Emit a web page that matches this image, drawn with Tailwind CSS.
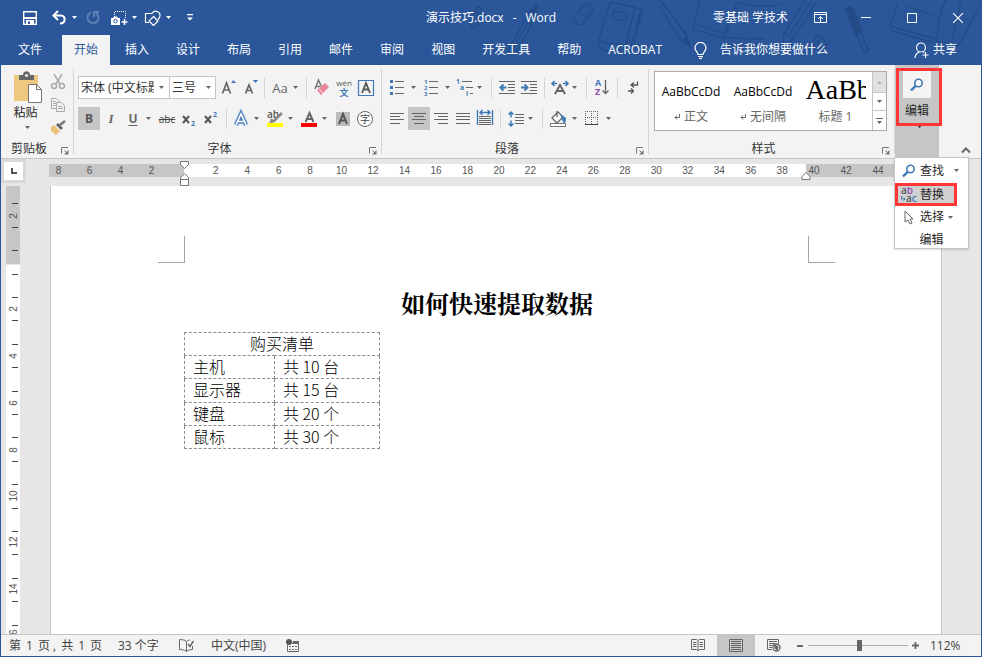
<!DOCTYPE html>
<html lang="zh-CN">
<head>
<meta charset="utf-8">
<meta name="viewport" content="width=device-width, initial-scale=1">
<title>演示技巧.docx - Word</title>
<script src="https://cdn.jsdelivr.net/npm/@tailwindcss/browser@4"></script>
</head>
<body class="h-screen flex flex-col overflow-hidden border-x border-b border-[#2b579a] bg-[#e6e6e6] text-[12px] leading-4 text-[#262626] font-['Open_Sans','Noto_Sans_CJK_SC',sans-serif]">

<svg class="hidden" aria-hidden="true">
  <symbol id="caret" viewBox="0 0 5 3"><path d="M0 0h5L2.5 3z" fill="currentColor"/></symbol>
  <symbol id="launcher" viewBox="0 0 8 8"><path d="M.5 6.500V.5H7M3.500 3.500l3 3" fill="none" stroke="#777"/><path d="M7.500 3v4.500H3z" fill="#777"/></symbol>
  <symbol id="lens" viewBox="0 0 14 14"><circle cx="8.500" cy="5" r="3.700" fill="#fff" stroke="#3f78b5" stroke-width="1.600"/><path d="M5.700 7.800L1 12.500" stroke="#3f78b5" stroke-width="2.400"/></symbol>
</svg>

<header class="relative shrink-0 bg-[#2b579a] text-white">
  <svg class="absolute right-0 top-0 w-[560px] h-[62px]" viewBox="420 0 560 62" fill="none" stroke="#234b88" stroke-width="1.300" aria-hidden="true">
    <path d="M474 10c2-5 7-3 6 1l-3 12c-1 7-9 6-7-1l3-8c1-4 5-3 4 1l-2 7"/>
    <path d="M536 4l-8 9-22 39M536 4l-2 13-19 37M528 13l6 4M531 15l-21 38"/><path d="M536 4l-5 7 4 3z" fill="#234b88"/>
    <path d="M573 17l11-13c4-1 8 2 8 6l-10 14c-5 3-10-2-9-7zM576 11l9 6"/>
    <path d="M609 2l31 7-10 37-33-4zM596 45l8 6 28-2 9-39M613 11l14 3-2 7-14-3zM634 6l-9 39"/>
    <path d="M660 2l25 31 4 13-11-8-19-32M662 3l25 35"/><path d="M689 46l-4-8-4 3z" fill="#234b88"/>
    <path d="M699 0l-7 29 31 9 17-36M695 25l28 8 13-31M740 3c16 4 29 5 45 0M724 38l40 1"/>
    <path d="M804 0l-21 34-2 14 11-9L815 2M783 34l9 4M788 35l22-33M818 50c-8-4-5-18 2-14 5 5 8 14 1 13-5-4-6-8-2-10"/>
    <path d="M845 9c3-4 8-2 9 3l7 19-6 4z" fill="#234b88"/><path d="M856 35l7 17 4-1-7-20"/>
    <path d="M897 3l-8 23 46 13M889 26l2 5 43 12M945 0c-8 13-7 24-10 41l22 5 22-40M960 1l-9 41M905 6l27 9"/>
  </svg>

  <div class="relative grid grid-cols-[1fr_auto_1fr] items-center h-[35px]">
    <div class="flex items-center pl-[18px]">
      <button aria-label="保存" class="w-[22px] h-6 flex items-center justify-center"><svg class="w-[14px] h-[14px]" viewBox="0 0 14 14"><path d="M.7.7h12.600v12.600H.7z" fill="none" stroke="#fff" stroke-width="1.400"/><path d="M1 6h12v2H1zM3 9h8v4H3z" fill="#fff"/><path d="M5 10.500h2V13H5z" fill="#2b579a"/></svg></button>
      <button aria-label="撤消" class="ml-[9px] w-[18px] h-6 flex items-center justify-center"><svg class="w-4 h-4" viewBox="0 0 16 16" fill="none" stroke="#fff" stroke-width="2"><path d="M7 1L2.500 5.500 7 10M3 5.500h7c5 0 5 8-1 8"/></svg></button>
      <button aria-label="撤消选项" class="w-3 h-6 flex items-center justify-center"><svg class="w-[5px] h-[3px]"><use href="#caret"/></svg></button>
      <button aria-label="恢复" class="ml-1 w-[18px] h-6 flex items-center justify-center text-[#5d80b5]"><svg class="w-4 h-4" viewBox="0 0 16 16" fill="none" stroke="currentColor" stroke-width="2"><path d="M6 2.500a5.500 5.500 0 1 0 5 .5M9 7V2h5"/></svg></button>
      <button aria-label="截图" class="ml-2 w-[18px] h-6 flex items-center justify-center"><svg class="w-[17px] h-4" viewBox="0 0 17 16"><path d="M3.500 7V1.500h11V9" fill="none" stroke="#fff" stroke-dasharray="1 1"/><path d="M0 8h2l1-1.500h3L7 8h2v7H0z" fill="#fff"/><circle cx="4.500" cy="11.200" r="1.700" fill="none" stroke="#2b579a"/><path d="M13.500 9v6M10.500 12h6" stroke="#fff" stroke-width="1.500"/></svg></button>
      <button aria-label="截图选项" class="w-3 h-6 flex items-center justify-center"><svg class="w-[5px] h-[3px]"><use href="#caret"/></svg></button>
      <button aria-label="形状" class="ml-[2px] w-[20px] h-6 flex items-center justify-center"><svg class="w-[17px] h-4" viewBox="0 0 17 16" fill="none" stroke="#fff" stroke-width="1.200"><path d="M5 12.500H1.500v-9H8M8 3.500c2-4 8-2.500 8 2 0 2-1 3-2 4M9.500 6.500L14 11l-4.500 4.500L5 11z"/></svg></button>
      <button aria-label="形状选项" class="w-3 h-6 flex items-center justify-center"><svg class="w-[5px] h-[3px]"><use href="#caret"/></svg></button>
      <button aria-label="自定义快速访问工具栏" class="ml-[10px] w-3 h-6 flex items-center justify-center"><svg class="w-[6px] h-[7px]" viewBox="0 0 6 7"><path d="M0 0h6v1.200H0zM0 3.500h6L3 6.500z" fill="#fff"/></svg></button>
    </div>
    <h1 class="flex gap-[9px]"><span>演示技巧.docx</span><span>-</span><span>Word</span></h1>
    <div class="flex items-center justify-end">
      <span class="mr-[9px]">零基础 学技术</span>
      <button aria-label="功能区显示选项" class="w-[46px] h-8 flex items-center justify-center"><svg class="w-[13px] h-[11px]" viewBox="0 0 13 11" fill="none" stroke="#fff"><path d="M.5.5h12v10H.5zM.5 2.500h12M6.500 10V4.500M4 7l2.500-2.500L9 7"/></svg></button>
      <button aria-label="最小化" class="w-[46px] h-8 flex items-center justify-center"><svg class="w-[10px] h-[10px]" viewBox="0 0 10 10"><path d="M0 4.500h10" stroke="#fff"/></svg></button>
      <button aria-label="最大化" class="w-[46px] h-8 flex items-center justify-center"><svg class="w-[10px] h-[10px]" viewBox="0 0 10 10"><path d="M.5.5h9v9h-9z" fill="none" stroke="#fff"/></svg></button>
      <button aria-label="关闭" class="w-[46px] h-8 flex items-center justify-center"><svg class="w-[10px] h-[10px]" viewBox="0 0 10 10"><path d="M0 0l10 10M10 0L0 10" stroke="#fff" stroke-width="1.100"/></svg></button>
    </div>
  </div>

  <nav class="relative flex h-[30px] gap-[3px] pl-[5px] whitespace-nowrap" aria-label="功能区选项卡">
    <button class="px-3 mr-[5px]">文件</button>
    <button class="px-3 bg-[#f3f3f3] text-[#2b579a]">开始</button>
    <button class="px-3">插入</button>
    <button class="px-3">设计</button>
    <button class="px-3">布局</button>
    <button class="px-3">引用</button>
    <button class="px-3">邮件</button>
    <button class="px-3">审阅</button>
    <button class="px-3">视图</button>
    <button class="px-3">开发工具</button>
    <button class="px-3">帮助</button>
    <button class="px-3">ACROBAT</button>
    <button class="flex items-center gap-[13px] ml-[17px]"><svg class="w-[13px] h-[17px]" viewBox="0 0 13 17" fill="none" stroke="#fff" stroke-width="1.200"><path d="M4 12.500c0-2-3-3.500-3-6.500a5.500 5.500 0 0 1 11 0c0 3-3 4.500-3 6.500zM4 14.500h5M5 16.400h3"/></svg>告诉我你想要做什么</button>
    <button class="flex items-center gap-[3px] ml-auto mr-6"><svg class="w-4 h-[17px]" viewBox="0 0 16 17" fill="none" stroke="#fff" stroke-width="1.200"><circle cx="7" cy="5.500" r="4.500"/><path d="M1 16c0-3 2-5 4.500-6.300M9 9.500l1 1M11.500 10v6M8.500 13h6"/></svg>共享</button>
  </nav>
</header>

<section class="relative shrink-0 flex h-[94px] border-b border-[#c6c6c6] bg-[#f3f3f3] text-[#666]" aria-label="功能区">
  <!-- 剪贴板 -->
  <div class="flex flex-col w-[72px]">
    <div class="flex pt-[6px]">
      <button class="flex flex-col items-center w-[49px] text-[#262626]">
        <svg class="w-[28px] h-[33px] ml-[4px]" viewBox="0 0 28 33"><path d="M0 4h24v26H0z" fill="#edc87e"/><path d="M5 4h4c0-5 7-5 7 0h4v5H5z" fill="#666"/><path d="M11 4.500h3" stroke="#fff" stroke-width="2"/><path d="M14.500 13.500h8l5 5v13h-13z" fill="#fff" stroke="#777"/><path d="M22.500 13.500v5h5" fill="none" stroke="#777"/></svg>
        <span class="mt-[1px]">粘贴</span>
        <svg class="w-[5px] h-[3px] mt-[5px] ml-1 text-[#666]"><use href="#caret"/></svg>
      </button>
      <div class="flex flex-col gap-[1px]">
        <button aria-label="剪切" class="w-4 h-[22px]"><svg class="w-4 h-4" viewBox="0 0 16 16" fill="none" stroke="#aaa" stroke-width="1.500"><path d="M4 0l6 10M12 0L6 10"/><circle cx="4" cy="12" r="2.500"/><circle cx="12" cy="12" r="2.500"/></svg></button>
        <button aria-label="复制" class="w-4 h-[22px]"><svg class="w-4 h-4" viewBox="0 0 16 16" fill="#f3f3f3" stroke="#aaa"><path d="M1.500 1.500h5l3 3v7h-8zM3 4.500h3M3 6.500h4M3 8.500h4"/><path d="M6.500 5.500h5l3 3v6h-8zM8 9.500h4.500M8 11.500h5"/></svg></button>
        <button aria-label="格式刷" class="w-4 h-[22px]"><svg class="w-4 h-4" viewBox="0 0 16 16"><path d="M1 7l3-2 6 6-4 4-5-4z" fill="#edc07a"/><path d="M6 5l2-2 5 5-2 2z" fill="#666"/><path d="M10 5l5-4" stroke="#777" stroke-width="2.500"/></svg></button>
      </div>
    </div>
    <div class="mt-auto flex items-center h-4 mb-px text-[#333]"><span class="flex-1 text-center">剪贴板</span><button aria-label="剪贴板选项" class="w-4 h-4 pt-1 pl-1"><svg class="w-2 h-2"><use href="#launcher"/></svg></button></div>
  </div>
  <div class="w-px my-1 bg-[#d4d4d4]"></div>

  <!-- 字体 -->
  <div class="flex flex-col w-[307px] pt-[11px]">
    <div class="flex items-center h-[23px] pl-1">
      <label class="relative w-[92px] h-[23px]"><span class="sr-only">字体</span>
        <select class="appearance-none w-full h-full bg-white border border-[#c6c6c6] pl-[2px] pr-[15px] text-[#333] overflow-hidden"><option>宋体 (中文标题)</option></select>
        <svg class="absolute right-[6px] top-[10px] w-[5px] h-[3px] pointer-events-none"><use href="#caret"/></svg></label>
      <label class="relative -ml-px w-[47px] h-[23px]"><span class="sr-only">字号</span>
        <select class="appearance-none w-full h-full bg-white border border-[#c6c6c6] pl-[2px] pr-3 text-[#333]"><option>三号</option></select>
        <svg class="absolute right-[5px] top-[10px] w-[5px] h-[3px] pointer-events-none"><use href="#caret"/></svg></label>
      <button aria-label="增大字号" class="ml-[2px] w-[22px]"><svg class="w-[22px] h-[22px]" viewBox="0 0 22 22"><path d="M4.500 16.500l4-10.500 4 10.500M6 13h5" fill="none" stroke="#666" stroke-width="1.700"/><path d="M13 6h5l-2.500-3z" fill="#3f78b5"/></svg></button>
      <button aria-label="减小字号" class="w-[22px]"><svg class="w-[22px] h-[22px]" viewBox="0 0 22 22"><path d="M5.500 16.500L9 8l3.500 8.500M7 13.500h4" fill="none" stroke="#666" stroke-width="1.700"/><path d="M13 3h5l-2.500 3z" fill="#3f78b5"/></svg></button>
      <span class="w-px h-5 mx-[2px] bg-[#d4d4d4]"></span>
      <button aria-label="更改大小写" class="w-8 ml-[2px] flex items-center"><span class="w-[22px] text-[13px] text-center">Aa</span><svg class="ml-[2px] w-[5px] h-[3px]"><use href="#caret"/></svg></button>
      <span class="w-px h-5 ml-[5px] mr-1 bg-[#d4d4d4]"></span>
      <button aria-label="清除所有格式" class="w-[22px]"><svg class="w-[22px] h-[22px]" viewBox="0 0 22 22"><path d="M4 12l3.500-9L11 11M5 9.500h4" fill="none" stroke="#777" stroke-width="1.500"/><path d="M6 13l8-7 4 4-8 8z" fill="#e9869a"/><path d="M8 11.500l4 5" stroke="#f6dfe3"/></svg></button>
      <button aria-label="拼音指南" class="w-[22px]"><svg class="w-[22px] h-[22px]" viewBox="0 0 22 22"><text x="11" y="9" text-anchor="middle" font-size="8" fill="#555">wén</text><text x="11" y="19" text-anchor="middle" font-size="9" font-weight="700" fill="#3f78b5">文</text></svg></button>
      <button aria-label="字符边框" class="w-[22px]"><svg class="w-[22px] h-[22px]" viewBox="0 0 22 22" fill="none"><path d="M3.500 3.500h15v15h-15z" stroke="#3f78b5" stroke-width="1.200"/><path d="M7 16l4-10 4 10M8.500 12.500h5" stroke="#555" stroke-width="1.800"/></svg></button>
    </div>
    <div class="flex items-center h-[23px] pl-1 mt-2">
      <button aria-label="加粗" class="w-[22px] h-[23px] bg-[#c6c6c6] font-bold text-[#555]">B</button>
      <button aria-label="倾斜" class="w-[22px] h-[23px] italic text-[13px] font-semibold font-['Liberation_Serif',serif]">I</button>
      <button aria-label="下划线" class="w-8 h-[23px] mr-[2px] flex items-center"><span class="w-[22px] text-center underline font-bold underline-offset-2">U</span><svg class="ml-[2px] w-[5px] h-[3px]"><use href="#caret"/></svg></button>
      <button aria-label="删除线" class="w-[22px] h-[23px] line-through text-[10px] text-[#444]">abc</button>
      <button aria-label="下标" class="w-[22px] h-[23px]"><svg class="w-[22px] h-[22px]" viewBox="0 0 22 22"><path d="M5 8l6 7M11 8l-6 7" stroke="#555" stroke-width="2"/><text x="13" y="18" font-size="7" font-weight="700" fill="#3f78b5">2</text></svg></button>
      <button aria-label="上标" class="w-[22px] h-[23px]"><svg class="w-[22px] h-[22px]" viewBox="0 0 22 22"><path d="M5 8l6 7M11 8l-6 7" stroke="#555" stroke-width="2"/><text x="13" y="9" font-size="7" font-weight="700" fill="#3f78b5">2</text></svg></button>
      <span class="w-px h-5 ml-1 mr-[3px] bg-[#d4d4d4]"></span>
      <button aria-label="文本效果" class="w-8 mr-[2px] flex items-center"><svg class="w-[22px] h-[22px]" viewBox="0 0 22 22" fill="none"><path d="M6 17l5-11 5 11M8 13.500h6" stroke="#bcd5ee" stroke-width="5.600"/><path d="M6 17l5-11 5 11M8 13.500h6" stroke="#3f78b5" stroke-width="3.800"/><path d="M6 16.800l5-10.800 5 10.800M8 13.500h6" stroke="#fff" stroke-width="1.600"/></svg><svg class="ml-[2px] w-[5px] h-[3px]"><use href="#caret"/></svg></button>
      <button aria-label="突出显示颜色" class="w-8 mr-[2px] flex items-center"><svg class="w-[22px] h-[22px]" viewBox="0 0 22 22"><text x="3" y="10" font-size="10" font-weight="600" fill="#555">ab</text><path d="M18 5l-8 8-3 1 1-3" fill="none" stroke="#888" stroke-width="2.500"/><path d="M3 15h16v4H3z" fill="#ff0"/></svg><svg class="ml-[2px] w-[5px] h-[3px]"><use href="#caret"/></svg></button>
      <button aria-label="字体颜色" class="w-8 mr-[2px] flex items-center"><svg class="w-[22px] h-[22px]" viewBox="0 0 22 22"><path d="M7.500 14l4-9 4 9M9 11h5" fill="none" stroke="#666" stroke-width="2"/><path d="M3 15h16v4H3z" fill="red"/></svg><svg class="ml-[2px] w-[5px] h-[3px]"><use href="#caret"/></svg></button>
      <button aria-label="字符底纹" class="w-[22px]"><svg class="w-[22px] h-[22px]" viewBox="0 0 22 22"><path d="M4 4h14v14H4z" fill="#bbb"/><path d="M7 16l4-10 4 10M8.500 12.500h5" fill="none" stroke="#555" stroke-width="2"/></svg></button>
      <button aria-label="带圈字符" class="w-[22px]"><svg class="w-[22px] h-[22px]" viewBox="0 0 22 22"><circle cx="11" cy="11" r="7.500" fill="#fff" stroke="#666"/><text x="11" y="14.500" text-anchor="middle" font-size="10" fill="#444">字</text></svg></button>
    </div>
    <div class="mt-auto flex items-center h-4 mb-px text-[#333]"><span class="flex-1 text-center">字体</span><button aria-label="字体选项" class="w-4 h-4 pt-1 pl-1"><svg class="w-2 h-2"><use href="#launcher"/></svg></button></div>
  </div>
  <div class="w-px my-1 bg-[#d4d4d4]"></div>

  <!-- 段落 -->
  <div class="flex flex-col w-[266px] pt-[11px]">
    <div class="flex items-center h-[23px] pl-1">
      <button aria-label="项目符号" class="w-8 mr-[2px] flex items-center"><svg class="w-[22px] h-[22px]" viewBox="0 0 22 22"><path d="M9 4.500h9M9 10.500h9M9 16.500h9" stroke="#666"/><path d="M4 3h3v3H4zM4 9h3v3H4zM4 15h3v3H4z" fill="#3f78b5"/></svg><svg class="ml-[3px] w-[5px] h-[3px]"><use href="#caret"/></svg></button>
      <button aria-label="编号" class="w-8 mr-[2px] flex items-center"><svg class="w-[22px] h-[22px]" viewBox="0 0 22 22"><path d="M9 4.500h9M9 10.500h9M9 16.500h9" stroke="#666"/><g font-size="6" font-weight="700" fill="#3f78b5"><text x="4" y="7">1</text><text x="4" y="13">2</text><text x="4" y="19">3</text></g></svg><svg class="ml-[3px] w-[5px] h-[3px]"><use href="#caret"/></svg></button>
      <button aria-label="多级列表" class="w-8 flex items-center"><svg class="w-[22px] h-[22px]" viewBox="0 0 22 22"><path d="M8 4.500h10M12 10.500h7M16 16.500h3" stroke="#666"/><g font-size="7" font-weight="700" fill="#3f78b5"><text x="2" y="7">1</text><text x="6" y="13">a</text><text x="12" y="19">i</text></g></svg><svg class="ml-px w-[5px] h-[3px]"><use href="#caret"/></svg></button>
      <span class="w-px h-5 ml-[5px] mr-1 bg-[#d4d4d4]"></span>
      <button aria-label="减少缩进量" class="w-[22px]"><svg class="w-[22px] h-[22px]" viewBox="0 0 22 22"><path d="M3 4.500h16M12 7.500h7M12 10.500h7M12 13.500h7M3 16.500h16" stroke="#666"/><path d="M10.500 10.500H5M7.500 7.500l-3 3 3 3" fill="none" stroke="#3f78b5" stroke-width="2"/></svg></button>
      <button aria-label="增加缩进量" class="w-[22px]"><svg class="w-[22px] h-[22px]" viewBox="0 0 22 22"><path d="M3 4.500h16M12 7.500h7M12 10.500h7M12 13.500h7M3 16.500h16" stroke="#666"/><path d="M3 10.500h6M6.500 7.500l3 3-3 3" fill="none" stroke="#3f78b5" stroke-width="2"/></svg></button>
      <span class="w-px h-5 mx-1 bg-[#d4d4d4]"></span>
      <button aria-label="中文版式" class="w-8 flex items-center"><svg class="w-[22px] h-[22px]" viewBox="0 0 22 22" fill="none"><path d="M6 17l5-9 5 9M8 14h6" stroke="#666" stroke-width="2"/><path d="M3 6.500h5M5.500 4L3 6.500 5.500 9M19 6.500h-5M16.500 4L19 6.500 16.500 9" stroke="#3f78b5" stroke-width="1.600"/></svg><svg class="ml-px w-[5px] h-[3px]"><use href="#caret"/></svg></button>
      <span class="w-px h-5 ml-[5px] mr-1 bg-[#d4d4d4]"></span>
      <button aria-label="排序" class="w-[22px]"><svg class="w-[22px] h-[22px]" viewBox="0 0 22 22"><g font-size="9" font-weight="700"><text x="4" y="9" fill="#3f78b5">A</text><text x="4" y="18" fill="#8e4fb0">Z</text></g><path d="M14.500 3v13M11.500 13.500l3 3 3-3" fill="none" stroke="#666" stroke-width="1.300"/></svg></button>
      <span class="w-px h-5 mx-1 bg-[#d4d4d4]"></span>
      <button aria-label="显示编辑标记" class="w-[22px]"><svg class="w-[22px] h-[22px]" viewBox="0 0 22 22" fill="none" stroke="#555" stroke-width="1.300"><path d="M15.500 4.500V8h-6M12 5.500L9 8l3 2.500M6 14h5M9 11.500l2.500 2.500L9 16.500"/></svg></button>
    </div>
    <div class="flex items-center h-[23px] pl-1 mt-2">
      <button aria-label="左对齐" class="w-[22px] h-[23px]"><svg class="w-[22px] h-[22px]" viewBox="0 0 22 22"><path d="M4 5.500h14M4 8.500h10M4 11.500h14M4 15.500h10" stroke="#666"/></svg></button>
      <button aria-label="居中" class="w-[22px] h-[23px] bg-[#c6c6c6]"><svg class="w-[22px] h-[22px]" viewBox="0 0 22 22"><path d="M4 5.500h14M6 8.500h10M4 11.500h14M6 15.500h10" stroke="#666"/></svg></button>
      <button aria-label="右对齐" class="w-[22px] h-[23px]"><svg class="w-[22px] h-[22px]" viewBox="0 0 22 22"><path d="M4 5.500h14M8 8.500h10M4 11.500h14M8 15.500h10" stroke="#666"/></svg></button>
      <button aria-label="两端对齐" class="w-[22px] h-[23px]"><svg class="w-[22px] h-[22px]" viewBox="0 0 22 22"><path d="M4 5.500h14M4 8.500h14M4 11.500h14M4 15.500h14" stroke="#666"/></svg></button>
      <button aria-label="分散对齐" class="w-[22px] h-[23px]"><svg class="w-[22px] h-[22px]" viewBox="0 0 22 22"><path d="M5 8.500h12M5 10.500h12M5 12.500h12M5 14.500h12M5 16.500h12" stroke="#666"/><path d="M3.500 2v15M18.500 2v15M6 4.500h10M8.500 2L6 4.500 8.500 7M13.500 2L16 4.500 13.500 7" fill="none" stroke="#3f78b5" stroke-width="1.400"/></svg></button>
      <span class="w-px h-5 mx-1 bg-[#d4d4d4]"></span>
      <button aria-label="行距" class="w-8 flex items-center"><svg class="w-[22px] h-[22px]" viewBox="0 0 22 22" fill="none"><path d="M10 6.500h9M10 9.500h9M10 12.500h9M10 15.500h9" stroke="#666"/><path d="M6 3.500v6M6 12.500v6M3.500 6.500L6 4l2.500 2.500M3.500 15.500L6 18l2.500-2.500" stroke="#3f78b5" stroke-width="1.500"/></svg><svg class="ml-px w-[5px] h-[3px]"><use href="#caret"/></svg></button>
      <span class="w-px h-5 ml-[5px] mr-1 bg-[#d4d4d4]"></span>
      <button aria-label="底纹" class="w-8 mr-[2px] flex items-center"><svg class="w-[22px] h-[22px]" viewBox="0 0 22 22"><path d="M5 10l6-6 5 5-6 6z" fill="#fff" stroke="#666" stroke-width="1.300"/><path d="M10 9V3" stroke="#666" stroke-width="1.300"/><path d="M13 6l6 4-1 6-2-2z" fill="#3f78b5"/><path d="M3.500 15.500h15v3h-15z" fill="#fff" stroke="#777"/></svg><svg class="ml-[3px] w-[5px] h-[3px]"><use href="#caret"/></svg></button>
      <button aria-label="边框" class="w-8 flex items-center"><svg class="w-[22px] h-[22px]" viewBox="0 0 22 22"><path d="M4.500 16V3M4 3.500h13M16.500 3v13M10.500 3v13M4 9.500h13" fill="none" stroke="#666" stroke-dasharray="1 1"/><path d="M4 16.500h13" stroke="#444"/></svg><svg class="ml-[3px] w-[5px] h-[3px]"><use href="#caret"/></svg></button>
    </div>
    <div class="mt-auto flex items-center h-4 mb-px text-[#333]"><span class="flex-1 text-center">段落</span><button aria-label="段落选项" class="w-4 h-4 pt-1 pl-1"><svg class="w-2 h-2"><use href="#launcher"/></svg></button></div>
  </div>
  <div class="w-px my-1 bg-[#d4d4d4]"></div>

  <!-- 样式 -->
  <div class="flex flex-col w-[245px] pt-[6px]">
    <div class="flex w-[233px] h-[60px] ml-[5px] border border-[#ababab] bg-white">
      <button class="w-[72px] h-full flex flex-col items-center"><span class="h-10 pt-3 text-black">AaBbCcDd</span><span class="flex items-center gap-1 h-[10px]"><svg class="w-[6px] h-[6px]" viewBox="0 0 6 6" fill="none" stroke="#666"><path d="M5.500 0v3.500H1M3 1.500l-2 2 2 2"/></svg>正文</span></button>
      <button class="w-[72px] h-full flex flex-col items-center"><span class="h-10 pt-3 text-black">AaBbCcDd</span><span class="flex items-center gap-1 h-[10px]"><svg class="w-[6px] h-[6px]" viewBox="0 0 6 6" fill="none" stroke="#666"><path d="M5.500 0v3.500H1M3 1.500l-2 2 2 2"/></svg>无间隔</span></button>
      <button class="flex-1 h-full flex flex-col items-center"><span class="w-[60px] h-10 pt-[3px] overflow-hidden whitespace-nowrap text-left text-[28px] leading-[30px] text-black font-['Liberation_Serif',serif]">AaBb</span><span class="flex items-center h-[10px]">标题 1</span></button>
      <div class="flex flex-col w-[14px] border-l border-[#c6c6c6]">
        <button aria-label="上一行" class="h-5 flex items-center justify-center bg-[#e1e1e1] text-[#b5b5b5]"><svg class="w-[5px] h-[3px] rotate-180"><use href="#caret"/></svg></button>
        <button aria-label="下一行" class="h-[19px] flex items-center justify-center border-y border-[#c6c6c6]"><svg class="w-[5px] h-[3px]"><use href="#caret"/></svg></button>
        <button aria-label="其他样式" class="flex-1 flex items-center justify-center"><svg class="w-[7px] h-[6px]" viewBox="0 0 7 6"><path d="M0 0h7v1H0zM1 3h5L3.500 6z" fill="#666"/></svg></button>
      </div>
    </div>
    <div class="mt-auto flex items-center h-4 mb-px text-[#333]"><span class="flex-1 text-center">样式</span><button aria-label="样式选项" class="w-4 h-4 pt-1 pl-1"><svg class="w-2 h-2"><use href="#launcher"/></svg></button></div>
  </div>
  <div class="w-px my-1 bg-[#d4d4d4]"></div>

  <!-- 编辑 -->
  <div class="relative w-[44px] bg-[#c6c6c6]">
    <button class="w-full flex flex-col items-center pt-[6px] text-[#262626]">
      <span class="w-7 h-[27px] flex items-center justify-center bg-[#f3f3f3]"><svg class="w-[14px] h-[14px]"><use href="#lens"/></svg></span>
      <span class="mt-[5px]">编辑</span>
      <svg class="mt-[6px] ml-1 w-[5px] h-[3px]"><use href="#caret"/></svg>
    </button>
    <div class="absolute left-[1px] top-[3px] w-[46px] h-[58px] border-3 border-[#ff3636]"></div>
    <div role="menu" class="absolute z-10 -left-px top-[92px] w-[75px] h-[92px] flex flex-col bg-white border border-[#c6c6c6] shadow-sm text-[#262626]">
      <button role="menuitem" class="flex items-center h-[25px] pl-[7px]"><svg class="w-[14px] h-[14px]"><use href="#lens"/></svg><span class="ml-1">查找</span><svg class="ml-[10px] w-[5px] h-[3px] text-[#666]"><use href="#caret"/></svg></button>
      <button role="menuitem" class="relative flex items-center h-[23px] w-[62px] pl-1 border-3 border-[#ff3636] bg-[#d0d0d0]"><svg class="-ml-[2px] w-[18px] h-4" viewBox="0 0 18 16" font-size="10" font-weight="600"><text x="1" y="7" fill="#555">a<tspan fill="#8e4fb0">b</tspan></text><text x="6" y="15" fill="#555">a<tspan fill="#3f78b5">c</tspan></text><path d="M1.500 9v3H5M3.500 10.500L5 12l-1.500 1.500" fill="none" stroke="#3f78b5"/></svg><span class="ml-[2px]">替换</span></button>
      <button role="menuitem" class="flex items-center h-[22px] pl-[9px]"><svg class="w-[10px] h-[15px]" viewBox="0 0 10 15"><path d="M1 1v11l3-2 2 4 2-1-2-4h3z" fill="#fff" stroke="#666"/></svg><span class="ml-[6px]">选择</span><svg class="ml-1 w-[5px] h-[3px] text-[#666]"><use href="#caret"/></svg></button>
      <div class="flex-1 pt-1 text-center">编辑</div>
    </div>
  </div>
  <button aria-label="折叠功能区" class="ml-auto mr-[10px] mt-auto mb-1"><svg class="w-[10px] h-[7px]" viewBox="0 0 10 7"><path d="M1 5.500l4-4 4 4" fill="none" stroke="#666" stroke-width="2"/></svg></button>
</section>

<main class="flex-1 min-h-0 flex flex-col">
  <!-- 水平标尺 -->
  <div class="relative shrink-0 flex h-[27px] text-[10px] leading-[13px] text-[#555] font-['Liberation_Sans',sans-serif]">
    <div class="w-[25px] h-[24px] bg-[#d9d9d9] p-[3px]"><button aria-label="制表符" class="w-[19px] h-[18px] flex items-center justify-center bg-white"><svg class="w-[6px] h-[6px]" viewBox="0 0 6 6"><path d="M1 0v5h5" fill="none" stroke="#555" stroke-width="2"/></svg></button></div>
    <div class="relative flex flex-1 h-[13px] mt-[5px] ml-[23px] mr-[40px]">
      <div class="flex justify-end w-[135px] pr-[17px] overflow-hidden bg-[#c6c6c6] text-center *:w-[31px] *:shrink-0"><span>8</span><span>6</span><span>4</span><span>2</span></div>
      <div class="flex flex-1 pl-4 pr-2 bg-white text-center *:flex-1 *:w-0"><span>2</span><span>4</span><span>6</span><span>8</span><span>10</span><span>12</span><span>14</span><span>16</span><span>18</span><span>20</span><span>22</span><span>24</span><span>26</span><span>28</span><span>30</span><span>32</span><span>34</span><span>36</span><span>38</span></div>
      <div class="flex gap-5 w-[135px] pl-[2px] bg-[#c6c6c6] text-center *:w-3"><span>40</span><span>42</span><span>44</span></div>
      <svg class="absolute left-[130px] -top-[3px] w-[11px] h-[26px]" viewBox="0 0 11 26" fill="#fff" stroke="#777"><path d="M1.500.5h8v3l-4 4-4-4zM5.500 12.500l4 4v2h-8v-2zM1.500 18.500h8v6h-8z"/></svg>
      <svg class="absolute right-[130px] top-[8px] w-[10px] h-[8px]" viewBox="0 0 10 8" fill="#fff" stroke="#777"><path d="M5 .5l4 4v3H1v-3z"/></svg>
    </div>
  </div>

  <div class="flex-1 min-h-0 flex overflow-hidden">
    <!-- 垂直标尺 -->
    <svg class="shrink-0 ml-[5px] w-[14px] h-[448px]" viewBox="0 0 14 448" aria-label="垂直标尺">
      <path d="M0 0h14v78H0z" fill="#c6c6c6"/><path d="M0 79h14v369H0z" fill="#fff"/>
      <path d="M6 17.500h6M6 41.500h6M6 64.500h6M6 88.500h6M6 111.500h6M6 134.500h6M6 158.500h6M6 181.500h6M6 205.500h6M6 228.500h6M6 251.500h6M6 275.500h6M6 298.500h6M6 322.500h6M6 345.500h6M6 368.500h6M6 392.500h6M6 415.500h6M6 439.500h6" stroke="#444"/>
      <g font-size="10" fill="#555" text-anchor="middle" font-family="Liberation Sans, sans-serif"><text transform="translate(11 30) rotate(-90)">2</text><text transform="translate(11 123) rotate(-90)">2</text><text transform="translate(11 170) rotate(-90)">4</text><text transform="translate(11 217) rotate(-90)">6</text><text transform="translate(11 264) rotate(-90)">8</text><text transform="translate(11 310) rotate(-90)">10</text><text transform="translate(11 356) rotate(-90)">12</text><text transform="translate(11 403) rotate(-90)">14</text><text transform="translate(11 449) rotate(-90)">16</text></g>
    </svg>
    <!-- 页面 -->
    <article class="flex-1 ml-[30px] mr-[39px] border-x border-[#c6c6c6] bg-white text-black">
      <div class="flex justify-between pl-[107px] pr-[106px] pt-[50px]" aria-hidden="true"><div class="w-[27px] h-[27px] border-r border-b border-[#a5a5a5]"></div><div class="w-[27px] h-[27px] border-l border-b border-[#a5a5a5]"></div></div>
      <div class="pl-[133px] pr-[131px] pt-6">
        <h2 class="h-8 text-center text-[24px] leading-8 font-bold font-['Noto_Serif_CJK_SC','Noto_Sans_CJK_SC',serif]">如何快速提取数据</h2>
        <table class="mt-[13px] w-[196px] h-[117px] table-fixed border-collapse text-[16px] leading-5 font-light font-['Noto_Sans_CJK_SC',sans-serif] [&_td]:border [&_td]:border-dashed [&_td]:border-[#8c8c8c] [&_td]:px-2 [&_td]:pt-0 [&_td]:pb-[2px] [&_th]:border [&_th]:border-dashed [&_th]:border-[#8c8c8c] [&_th]:font-light [&_th]:pt-0 [&_th]:pb-[2px]">
          <colgroup><col class="w-[90px]"><col></colgroup>
          <thead><tr><th colspan="2">购买清单</th></tr></thead>
          <tbody>
            <tr><td>主机</td><td>共 10 台</td></tr>
            <tr><td>显示器</td><td>共 15 台</td></tr>
            <tr><td>键盘</td><td>共 20 个</td></tr>
            <tr><td>鼠标</td><td>共 30 个</td></tr>
          </tbody>
        </table>
      </div>
    </article>
  </div>
</main>

<footer class="shrink-0 flex items-center h-[22px] border-t border-[#c6c6c6] bg-[#f3f3f3] pl-2 pr-[18px] text-[#444]">
  <span class="w-[109px] flex gap-[5px] whitespace-nowrap"><span>第</span><span>1</span><span>页 ,</span><span>共</span><span>1</span><span>页</span></span>
  <span class="w-[61px] whitespace-nowrap">33 个字</span>
  <button aria-label="校对"><svg class="w-[15px] h-[13px]" viewBox="0 0 15 13" fill="none" stroke="#666"><path d="M7.500 12V2.500C6 1 3 .5.500.500v10c3 0 5 .5 7 2 2-1.500 3-2 6-2V7M7.500 2.500C8.500 1.500 10 1 11 1"/><path d="M9 5l2 2.500 3.500-5.500" stroke-width="1.500"/></svg></button>
  <span class="ml-[17px] w-[75px]">中文(中国)</span>
  <button aria-label="宏录制"><svg class="w-[14px] h-[13px]" viewBox="0 0 14 13"><path d="M1.500 6v6.500h11v-10H7" fill="none" stroke="#666"/><path d="M7 2h6v3H6z" fill="#666"/><circle cx="3" cy="3" r="3" fill="#555"/><path d="M3 7.500h8M3 10.500h8" stroke="#666" stroke-dasharray="2 1"/></svg></button>
  <button aria-label="阅读视图" class="ml-auto w-[38px] h-[21px] flex items-center justify-center"><svg class="w-[14px] h-[13px]" viewBox="0 0 14 13" fill="none" stroke="#666"><path d="M.5.5h5l1.500 1 1.500-1h5v10h-5L7 12l-1.500-1.500h-5zM7 2v10M2 3.500h3.500M2 5.500h3.500M2 7.500h3.500M8.500 3.500H12M8.500 5.500H12M8.500 7.500H12"/></svg></button>
  <button aria-label="页面视图" class="w-[38px] h-[21px] flex items-center justify-center bg-[#c6c6c6]"><svg class="w-[14px] h-[13px]" viewBox="0 0 14 13" fill="none" stroke="#666"><path d="M.5.5h13v12H.5zM2 2.500h10M2 4.500h10M2 6.500h10M2 8.500h10M2 10.500h10"/></svg></button>
  <button aria-label="Web 版式视图" class="w-[38px] h-[21px] flex items-center justify-center"><svg class="w-[14px] h-[13px]" viewBox="0 0 14 13" fill="none" stroke="#666"><path d="M5 10.500H.5V.5h11v4M2 2.500h8M2 4.500h6M2 6.500h4M2 8.500h3"/><circle cx="9.500" cy="8.500" r="3.500" fill="#ddd" stroke-width="1.300"/><path d="M8 6l3 2-1 3-2-2z" fill="#666"/></svg></button>
  <button aria-label="缩小" class="ml-px w-3 h-4 flex items-center justify-center"><svg class="w-[6px] h-[2px]"><path d="M0 0h6v2H0z" fill="#666"/></svg></button>
  <input type="range" aria-label="显示比例" min="0" max="100" value="52" class="appearance-none w-[100px] h-[15px] mx-[2px] py-[7px] bg-[#ababab] bg-clip-content [&::-webkit-slider-thumb]:appearance-none [&::-webkit-slider-thumb]:w-[5px] [&::-webkit-slider-thumb]:h-[11px] [&::-webkit-slider-thumb]:bg-[#666]">
  <button aria-label="放大" class="w-[10px] h-4 flex items-center justify-center"><svg class="w-[7px] h-[7px]"><path d="M0 3.500h7M3.500 0v7" stroke="#666" stroke-width="1.800"/></svg></button>
  <span class="ml-[10px] w-[33px]">112%</span>
</footer>
</body>
</html>
